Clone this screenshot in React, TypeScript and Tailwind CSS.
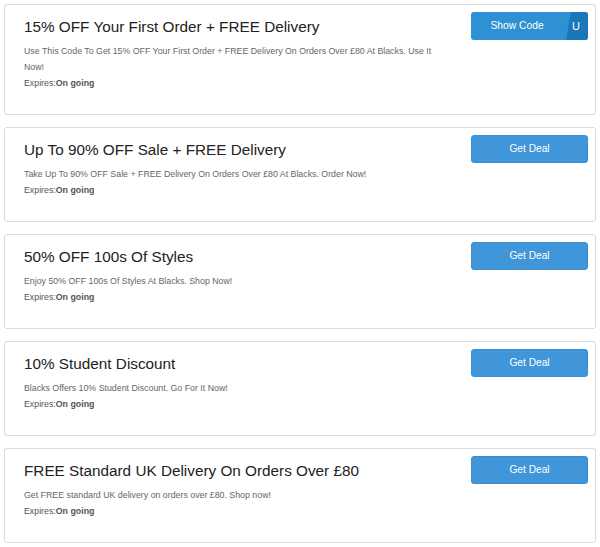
const deals = [
  {
    title: "15% OFF Your First Order + FREE Delivery",
    desc: "Use This Code To Get 15% OFF Your First Order + FREE Delivery On Orders Over £80 At Blacks. Use It Now!",
    code: "U",
  },
  {
    title: "Up To 90% OFF Sale + FREE Delivery",
    desc: "Take Up To 90% OFF Sale + FREE Delivery On Orders Over £80 At Blacks. Order Now!",
  },
  {
    title: "50% OFF 100s Of Styles",
    desc: "Enjoy 50% OFF 100s Of Styles At Blacks. Shop Now!",
  },
  {
    title: "10% Student Discount",
    desc: "Blacks Offers 10% Student Discount. Go For It Now!",
  },
  {
    title: "FREE Standard UK Delivery On Orders Over £80",
    desc: "Get FREE standard UK delivery on orders over £80. Shop now!",
  },
]

function CodeButton({ code }: { code: string }) {
  return (
    <button className="relative h-[28px] w-[117px] overflow-hidden rounded-[3px] bg-[#2f91d4] text-[10.3px] text-white">
      <span className="absolute inset-y-0 left-0 flex w-[92px] items-center justify-center">Show Code</span>
      {/* peeled corner showing the end of the code */}
      <span
        className="absolute inset-y-0 right-0 flex w-[22px] items-center bg-[#1b78b8] pl-[6px] text-[11px]"
        style={{ clipPath: "polygon(5px 0, 100% 0, 100% 100%, 0 100%)" }}
      >
        {code}
      </span>
    </button>
  )
}

function DealButton() {
  return (
    <button className="flex h-[28px] w-[117px] items-center justify-center rounded-[3px] border border-[#3a8fd2] bg-[#4196d9] text-[10.2px] text-white">
      Get Deal
    </button>
  )
}

export default function App() {
  return (
    <div className="flex w-[600px] flex-col gap-[12px] bg-white px-[4px] pt-[4px] font-['Liberation_Sans',Arial,sans-serif]">
      {deals.map((deal, i) => (
        <div key={i} className="flex w-[592px] justify-between rounded-[3px] border border-[#dcdcdc] bg-white p-[7px]">
          <div className="flex-1 pb-[16px] pl-[12px] pr-[20px] pt-[5px]">
            <h3 className="text-[15.3px] leading-[20px] text-[#222]">{deal.title}</h3>
            <p className="mt-[6px] text-[8.8px] leading-[16px] text-[#666]">{deal.desc}</p>
            <p className="text-[8.8px] leading-[16px] text-[#555]">
              Expires:<span className="font-bold">On going</span>
            </p>
          </div>
          {deal.code ? <CodeButton code={deal.code} /> : <DealButton />}
        </div>
      ))}
    </div>
  )
}
